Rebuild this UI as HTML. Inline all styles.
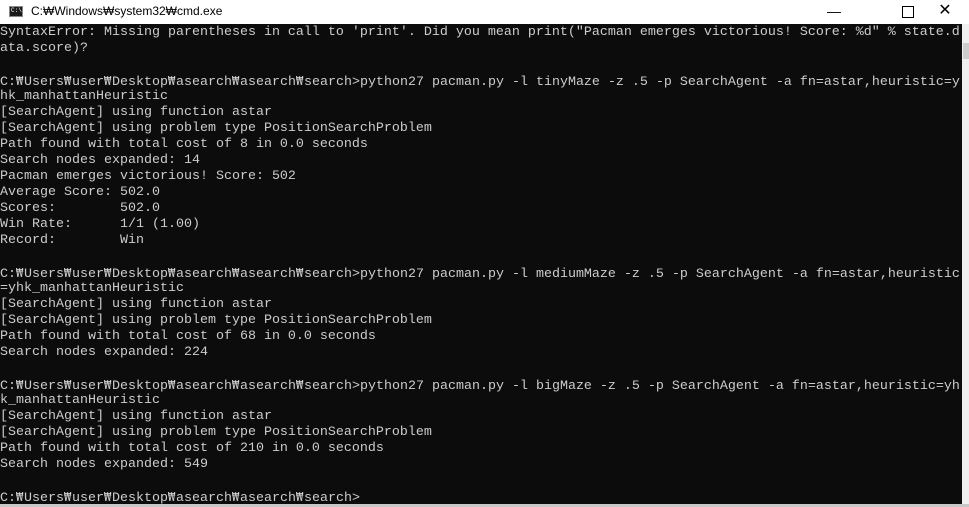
<!DOCTYPE html>
<html><head><meta charset="utf-8"><style>
*{margin:0;padding:0}
body{width:969px;height:507px;overflow:hidden;background:#0c0c0c;position:relative;font-family:"Liberation Sans","Noto Sans CJK KR",sans-serif}
#tb{position:absolute;left:0;top:0;width:969px;height:24px;background:#fff}
#tb .t{position:absolute;left:31px;top:4px;font-size:12px;color:#000}
#ic{position:absolute;left:9px;top:6px;width:14px;height:11px;background:#1a1a1a;border:1px solid #888;box-sizing:border-box}
#ic:after{content:"C:\\";position:absolute;left:1px;top:0;font-size:6px;color:#fff;font-family:"Liberation Mono",monospace}
.ctl{position:absolute;top:0;height:24px;width:46px;color:#000;font-size:14px;text-align:center;line-height:22px}
#term{position:absolute;left:0;top:25px;width:962px;height:480px;overflow:hidden;font-family:"Liberation Mono","DejaVu Sans Mono",monospace;font-size:13.33px;color:#cccccc;line-height:16px}
.l{height:16px;overflow:hidden;white-space:pre}
.w{display:inline-block;width:8px;font-family:"DejaVu Sans Mono",monospace;font-size:12px}
#sb{position:absolute;left:962px;top:24px;width:7px;height:480px;background:#f0f0f0}
#thumb{position:absolute;left:963px;top:43px;width:6px;height:16px;background:#cdcdcd}
#bot{position:absolute;left:0;top:504px;width:969px;height:3px;background:#c8c8c8}
</style></head><body>
<div id="tb"><div id="ic"></div><div class="t">C:₩Windows₩system32₩cmd.exe</div>
<div class="ctl" style="left:811px">&#8212;</div>
<div class="ctl" style="left:885px"><div style="width:10px;height:10px;border:1px solid #000;margin:6px auto 0"></div></div>
<div class="ctl" style="left:922px;font-size:16px">&#10005;</div></div>
<div id="term"><div class="l">SyntaxError: Missing parentheses in call to 'print'. Did you mean print("Pacman emerges victorious! Score: %d" % state.d</div><div class="l">ata.score)?</div><div class="l"> </div><div class="l">C:<span class="w">₩</span>Users<span class="w">₩</span>user<span class="w">₩</span>Desktop<span class="w">₩</span>asearch<span class="w">₩</span>asearch<span class="w">₩</span>search&gt;python27 pacman.py -l tinyMaze -z .5 -p SearchAgent -a fn=astar,heuristic=y</div><div class="l">hk_manhattanHeuristic</div><div class="l">[SearchAgent] using function astar</div><div class="l">[SearchAgent] using problem type PositionSearchProblem</div><div class="l">Path found with total cost of 8 in 0.0 seconds</div><div class="l">Search nodes expanded: 14</div><div class="l">Pacman emerges victorious! Score: 502</div><div class="l">Average Score: 502.0</div><div class="l">Scores:        502.0</div><div class="l">Win Rate:      1/1 (1.00)</div><div class="l">Record:        Win</div><div class="l"> </div><div class="l">C:<span class="w">₩</span>Users<span class="w">₩</span>user<span class="w">₩</span>Desktop<span class="w">₩</span>asearch<span class="w">₩</span>asearch<span class="w">₩</span>search&gt;python27 pacman.py -l mediumMaze -z .5 -p SearchAgent -a fn=astar,heuristic</div><div class="l">=yhk_manhattanHeuristic</div><div class="l">[SearchAgent] using function astar</div><div class="l">[SearchAgent] using problem type PositionSearchProblem</div><div class="l">Path found with total cost of 68 in 0.0 seconds</div><div class="l">Search nodes expanded: 224</div><div class="l"> </div><div class="l">C:<span class="w">₩</span>Users<span class="w">₩</span>user<span class="w">₩</span>Desktop<span class="w">₩</span>asearch<span class="w">₩</span>asearch<span class="w">₩</span>search&gt;python27 pacman.py -l bigMaze -z .5 -p SearchAgent -a fn=astar,heuristic=yh</div><div class="l">k_manhattanHeuristic</div><div class="l">[SearchAgent] using function astar</div><div class="l">[SearchAgent] using problem type PositionSearchProblem</div><div class="l">Path found with total cost of 210 in 0.0 seconds</div><div class="l">Search nodes expanded: 549</div><div class="l"> </div><div class="l">C:<span class="w">₩</span>Users<span class="w">₩</span>user<span class="w">₩</span>Desktop<span class="w">₩</span>asearch<span class="w">₩</span>asearch<span class="w">₩</span>search&gt;</div></div>
<div id="sb"></div><div id="thumb"></div>
<div id="bot"></div>
</body></html>
